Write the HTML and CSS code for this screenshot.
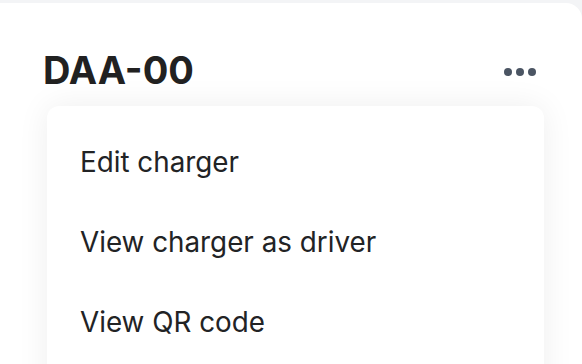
FILE: index.html
```html
<!DOCTYPE html>
<html lang="en">
<head>
<meta charset="utf-8">
<title>DAA-00</title>
<link rel="stylesheet" href="styles.css">
</head>
<body>
<div class="card">
  <div class="header">
    <h1 class="title">DAA-00</h1>
    <button class="more" aria-label="More actions">
      <svg width="32" height="8" viewBox="0 0 32 8"><circle cx="4" cy="4" r="4"/><circle cx="16" cy="4" r="4"/><circle cx="28" cy="4" r="4"/></svg>
    </button>
  </div>
  <ul class="menu">
    <li class="menu-item">Edit charger</li>
    <li class="menu-item">View charger as driver</li>
    <li class="menu-item">View QR code</li>
  </ul>
</div>
</body>
</html>
```
FILE: styles.css
```css
html, body {
  margin: 0;
  padding: 0;
  height: 100%;
  overflow: hidden;
}
body {
  background: #f3f4f6;
  font-family: Inter, "Noto Sans", sans-serif;
}
.card {
  margin-top: 3px;
  margin-left: -24px;
  height: 361px;
  box-sizing: border-box;
  overflow: hidden;
  background: #ffffff;
  border-radius: 16px 16px 0 0;
  padding: 48px 46px 0 66px;
}
.header {
  display: flex;
  justify-content: space-between;
  align-items: center;
}
.title {
  margin: 0;
  font-size: 38px;
  line-height: 38px;
  font-weight: 700;
  color: #212121;
  padding-left: 1px;
}
.more {
  border: 0;
  background: none;
  padding: 0;
  margin-top: 4px;
  display: flex;
}
.more svg {
  fill: #4b5563;
}
.menu {
  list-style: none;
  margin: 17px 0 0 5px;
  width: 497px;
  padding: 16px 0 0 0;
  background: #ffffff;
  border-radius: 12px;
  box-shadow: 0 0 32px rgba(0, 0, 0, 0.07);
  height: 300px;
  box-sizing: border-box;
}
.menu-item {
  padding: 24px 33px;
  font-size: 27.8px;
  line-height: 32px;
  color: #222325;
}
```
